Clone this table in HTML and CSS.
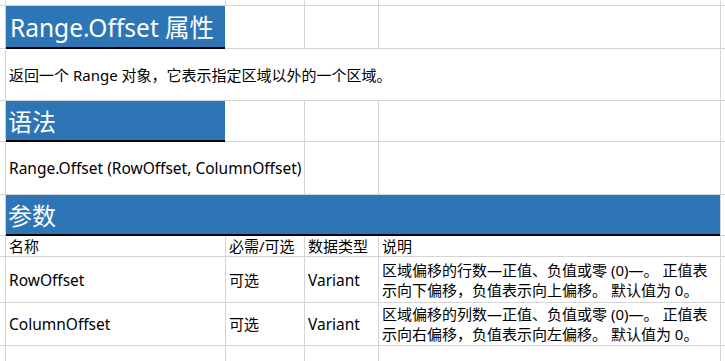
FILE: index.html
```html
<!DOCTYPE html>
<html lang="zh-CN">
<head>
<meta charset="utf-8">
<title>Range.Offset 属性</title>
<link rel="stylesheet" href="styles.css">
</head>
<body>
<div class="sheet">
  <!-- row 0 -->
  <div class="c"></div><div class="c"></div><div class="c"></div><div class="c"></div><div class="c"></div><div class="c"></div>
  <!-- row 1 -->
  <div class="c"></div>
  <div class="c span-bc"><div class="band band-title">Range.Offset 属性</div></div>
  <div class="c"></div><div class="c"></div><div class="c"></div>
  <!-- row 2 -->
  <div class="c"></div>
  <div class="c span-be text pad-b">返回一个 Range 对象，它表示指定区域以外的一个区域。</div>
  <div class="c"></div>
  <!-- row 3 -->
  <div class="c"></div>
  <div class="c span-bc"><div class="band band-head">语法</div></div>
  <div class="c"></div><div class="c"></div><div class="c"></div>
  <!-- row 4 -->
  <div class="c"></div>
  <div class="c span-bc text latin pad-b">Range.Offset (RowOffset, ColumnOffset)</div>
  <div class="c"></div><div class="c"></div><div class="c"></div>
  <!-- row 5 -->
  <div class="c"></div>
  <div class="c span-be"><div class="band band-head band-full">参数</div></div>
  <div class="c"></div>
  <!-- row 6 -->
  <div class="c"></div>
  <div class="c text pad-b bottom">名称</div>
  <div class="c text pad bottom">必需/可选</div>
  <div class="c text pad bottom">数据类型</div>
  <div class="c text pad bottom">说明</div>
  <div class="c"></div>
  <!-- row 7 -->
  <div class="c"></div>
  <div class="c text latin pad-b">RowOffset</div>
  <div class="c text pad">可选</div>
  <div class="c text latin pad">Variant</div>
  <div class="c text pad wrap">区域偏移的行数—正值、负值或零 (0)—。 正值表示向下偏移，负值表示向上偏移。 默认值为 0。</div>
  <div class="c"></div>
  <!-- row 8 -->
  <div class="c"></div>
  <div class="c text latin pad-b">ColumnOffset</div>
  <div class="c text pad">可选</div>
  <div class="c text latin pad">Variant</div>
  <div class="c text pad wrap">区域偏移的列数—正值、负值或零 (0)—。 正值表示向右偏移，负值表示向左偏移。 默认值为 0。</div>
  <div class="c"></div>
  <!-- row 9 -->
  <div class="c"></div><div class="c"></div><div class="c"></div><div class="c"></div><div class="c"></div><div class="c"></div>
</div>
</body>
</html>
```
FILE: styles.css
```css
html, body {
  margin: 0;
  padding: 0;
  background: #ffffff;
}
body {
  width: 725px;
  height: 361px;
  overflow: hidden;
  font-family: "Noto Sans", "Noto Sans CJK SC", sans-serif;
  color: #000000;
}
.sheet {
  display: grid;
  grid-template-columns: 5px 219px 78px 73px 341px 4px;
  grid-template-rows: 5px 42px 51px 40px 52px 40px 20px 45px 42px 15px;
  gap: 1px;
  background: #d4d4d4;
  width: 725px;
  height: 361px;
}
.c {
  background: #ffffff;
  min-width: 0;
  position: relative;
}
.span-bc { grid-column: 2 / span 2; }
.span-be { grid-column: 2 / span 4; }
.text {
  display: flex;
  align-items: center;
  font-size: 15px;
  line-height: 20px;
  white-space: nowrap;
}
.latin {
  font-size: 15.5px;
}
.pad-b { padding-left: 3px; }
.pad { padding-left: 3px; }
.bottom { align-items: flex-end; }
.wrap {
  white-space: normal;
  padding-right: 2px;
}
.band {
  box-sizing: border-box;
  background: #2e75b6;
  color: #ffffff;
  width: 219px;
  border-bottom: 2px solid #000000;
  display: flex;
  align-items: center;
  white-space: nowrap;
}
.band-title {
  height: 43px;
  font-size: 24.5px;
  padding-left: 4px;
}
.band-head {
  height: 41px;
  font-size: 24px;
  padding-left: 2px;
}
.band-full {
  width: auto;
}
```
